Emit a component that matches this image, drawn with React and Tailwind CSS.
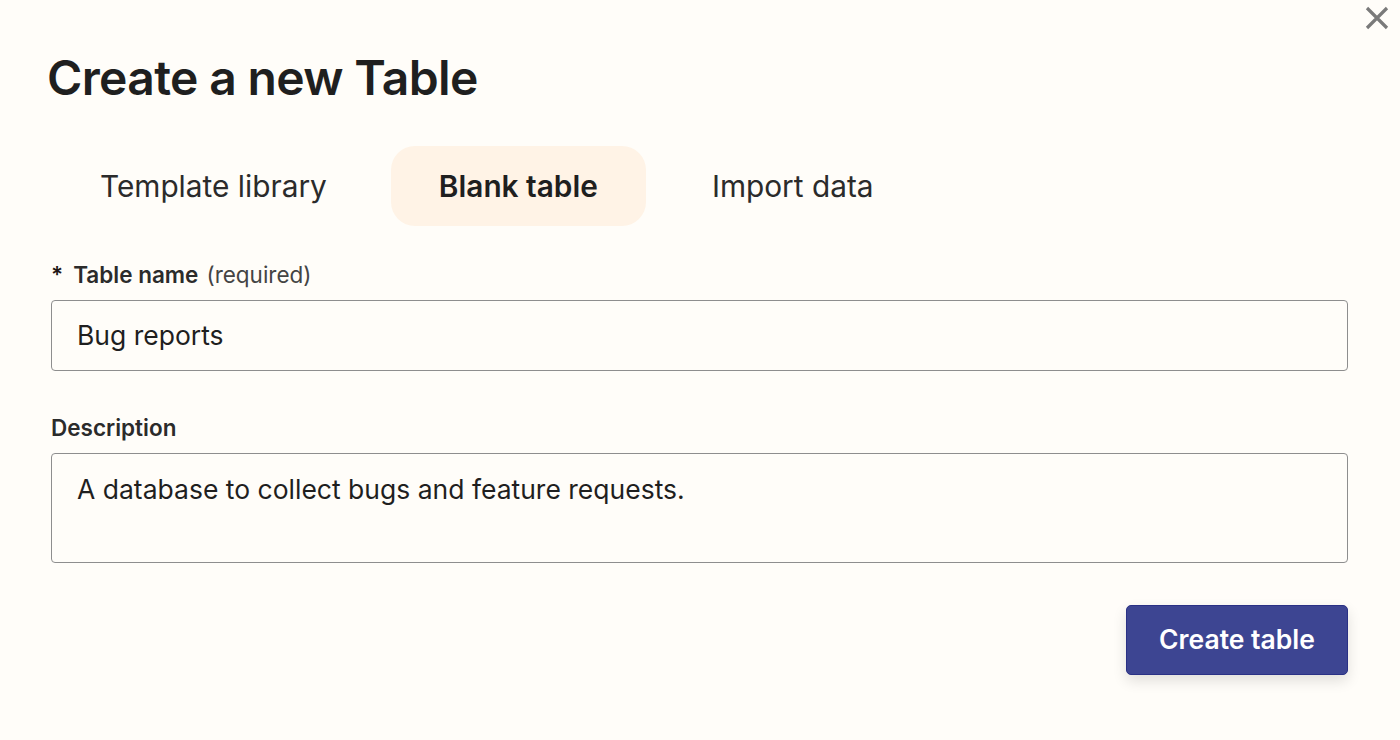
export default function App() {
  return (
    <div className="relative w-[1400px] h-[740px] bg-[#fffdf9] text-[#201515] overflow-hidden" style={{ fontFamily: 'Inter, "Noto Sans", sans-serif' }}>
      {/* close */}
      <button className="absolute top-[4px] right-[9px] w-[28px] h-[28px] flex items-center justify-center text-[#7a7a7a]">
        <svg width="26" height="26" viewBox="0 0 26 26" fill="none" stroke="currentColor" strokeWidth="3.2">
          <path d="M3 3 L23 23 M23 3 L3 23" />
        </svg>
      </button>

      <div className="pl-[47px] pr-[52px] pt-[50px]">
        <h1 className="text-[48px] leading-[56px] font-semibold tracking-[-0.65px] text-[#1f1f1f]">Create a new Table</h1>

        {/* tabs */}
        <div className="mt-[40px] flex items-center">
          <div className="pl-[53px] h-[80px] flex items-center text-[29.8px] text-[#2b2b2b]">Template library</div>
          <div className="ml-[64px] px-[48px] h-[80px] flex items-center rounded-[24px] bg-[#fff3e6] text-[29.8px] font-semibold text-[#1f1f1f]">Blank table</div>
          <div className="ml-[66px] h-[80px] flex items-center text-[29.8px] text-[#2b2b2b]">Import data</div>
        </div>

        {/* form */}
        <div className="pl-[4px] mt-[35px]">
          <label className="flex items-center gap-[10px] text-[22.5px] leading-[28px]">
            <span className="font-semibold">*</span>
            <span className="font-semibold text-[#2b2b2b]">Table name</span>
            <span className="-ml-[2px] text-[#444]">(required)</span>
          </label>
          <div className="mt-[11px] h-[71px] rounded-[4px] border border-[#8e8e8e] bg-[#fffdf9] flex items-center px-[25px] text-[26.5px] text-[#1f1f1f]">
            Bug reports
          </div>

          <div className="mt-[43px] text-[22.5px] leading-[28px] font-semibold text-[#2b2b2b]">Description</div>
          <div className="mt-[11px] h-[110px] rounded-[4px] border border-[#8e8e8e] bg-[#fffdf9] px-[25px] pt-[19px] text-[26.5px] leading-[32px] text-[#1f1f1f]">
            A database to collect bugs and feature requests.
          </div>

          <div className="mt-[42px] flex justify-end">
            <button className="w-[222px] h-[70px] rounded-[5px] bg-[#3d4592] border border-[#2a3185] text-white text-[26.5px] font-semibold shadow-[0_6px_14px_rgba(0,0,0,0.12)]">
              Create table
            </button>
          </div>
        </div>
      </div>
    </div>
  );
}
